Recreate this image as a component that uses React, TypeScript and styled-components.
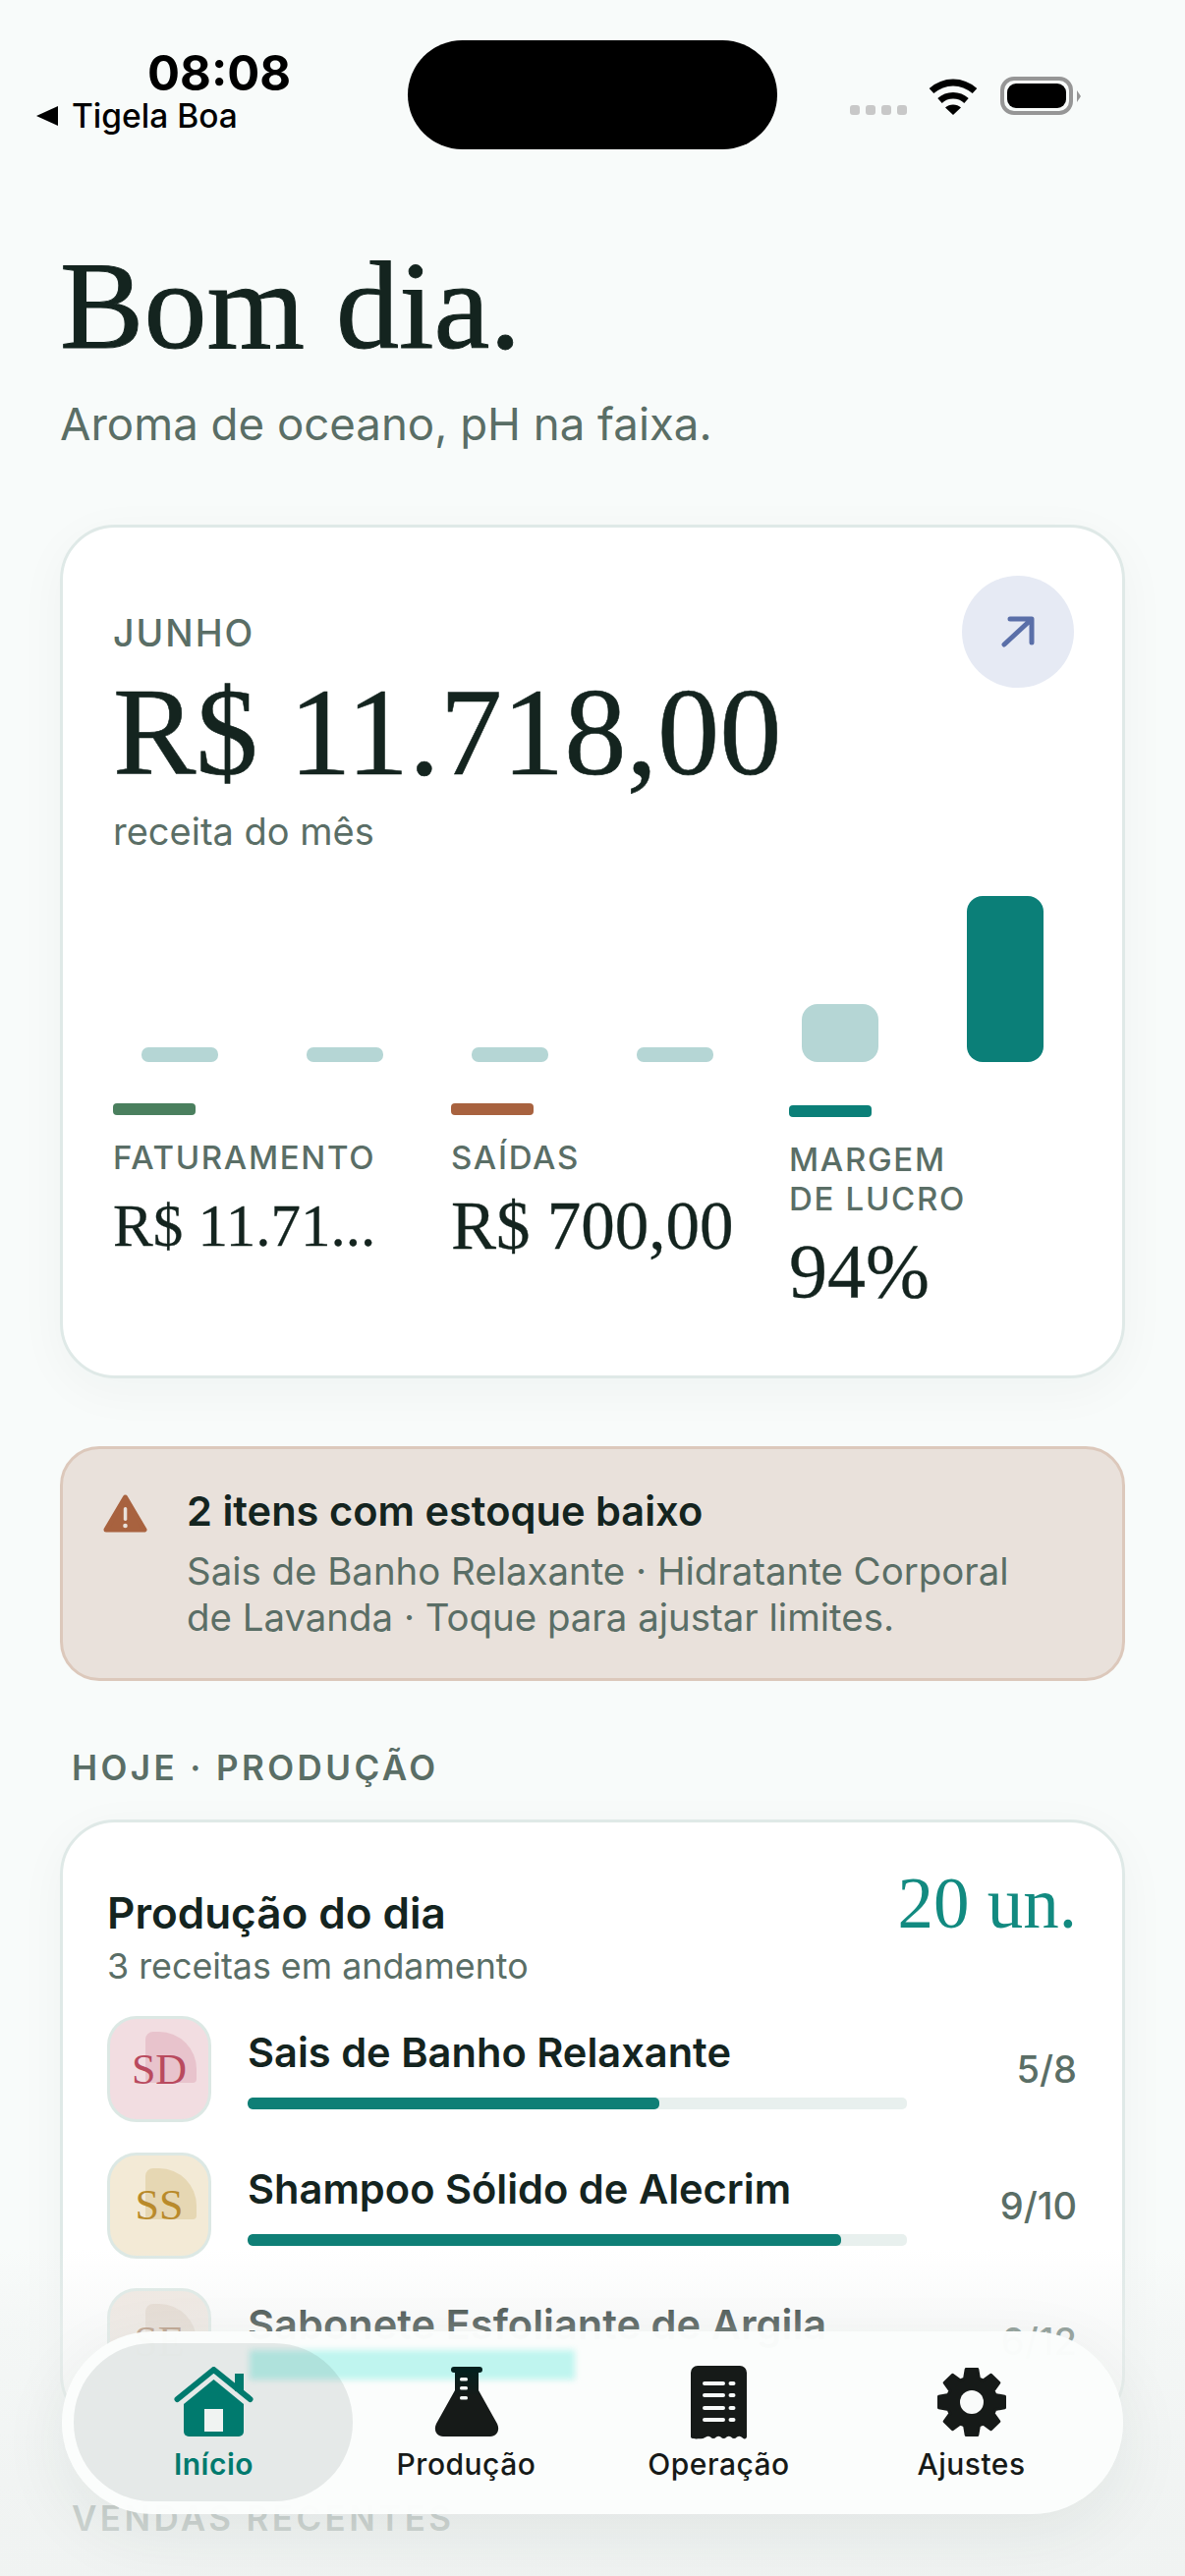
import React from 'react';

import styled, { createGlobalStyle } from 'styled-components';

const sans = `Inter, "Liberation Sans", sans-serif`;
const serif = `"Liberation Serif", "Times New Roman", serif`;

const GlobalStyle = createGlobalStyle`
  html, body {
    margin: 0;
    padding: 0;
    background: #f8fbfa;
  }
  * {
    box-sizing: border-box;
  }
`;

const Screen = styled.div`
  position: relative;
  width: 1206px;
  height: 2622px;
  overflow: hidden;
  background: #f8fbfa;
  font-family: ${sans};
  color: #14241f;
`;

const StatusBar = styled.div`
  display: flex;
  align-items: flex-start;
  height: 152px;
  padding-top: 41px;
`;

const StatusLeft = styled.div`
  width: 415px;
  display: flex;
  flex-direction: column;
  padding-left: 37px;
`;

const Time = styled.div`
  font-size: 49px;
  line-height: 54px;
  font-weight: 700;
  color: #000;
  margin: 7px 0 0 113px;
`;

const BackLink = styled.div`
  display: flex;
  align-items: center;
  gap: 14px;
  margin-top: -3px;
  font-size: 33.5px;
  line-height: 38px;
  font-weight: 500;
  color: #000;
`;

const Island = styled.div`
  width: 376px;
  height: 111px;
  border-radius: 56px;
  background: #000;
`;

const StatusRight = styled.div`
  display: flex;
  align-items: flex-end;
  margin-left: 74px;
  margin-top: 37px;
`;

const Signal = styled.div`
  display: flex;
  gap: 6px;
  margin-right: 22px;
`;

const SignalDot = styled.span`
  width: 10px;
  height: 10px;
  border-radius: 3px;
  background: #c8c8c8;
`;

const Battery = styled.div`
  position: relative;
  width: 74px;
  height: 39px;
  margin-left: 23px;
  border: 4px solid #969696;
  border-radius: 14px;
  padding: 3px;

  &::after {
    content: '';
    position: absolute;
    right: -12px;
    top: 10px;
    border-left: 4px solid #969696;
    border-top: 6px solid transparent;
    border-bottom: 6px solid transparent;
  }
`;

const BatteryLevel = styled.div`
  height: 100%;
  border-radius: 9px;
  background: #000;
`;

const Main = styled.main`
  padding: 94px 61px 0;
`;

const Title = styled.h1`
  margin: 0;
  font-family: ${serif};
  font-size: 128px;
  line-height: 130px;
  font-weight: 400;
  -webkit-text-stroke: 1px #14241f;
`;

const Subtitle = styled.p`
  margin: 29px 0 0;
  font-size: 45.6px;
  line-height: 54px;
  color: #5a6e66;
`;

const Card = styled.section`
  border: 3px solid #dfe9e7;
  border-radius: 56px;
  background: #fff;
  box-shadow: 0 12px 50px rgba(30, 60, 50, 0.04);
`;

const RevenueCard = styled(Card)`
  margin-top: 75px;
  height: 869px;
  padding: 49px 49px 0 51px;
`;

const RevenueHead = styled.div`
  display: flex;
  justify-content: space-between;
  align-items: flex-start;
`;

const RevenueText = styled.div`
  padding-top: 37px;
`;

const Month = styled.div`
  font-size: 37.5px;
  line-height: 44px;
  font-weight: 500;
  letter-spacing: 2px;
  color: #5a6e66;
`;

const Amount = styled.div`
  margin-top: 13px;
  font-family: ${serif};
  font-size: 126.5px;
  line-height: 130px;
  -webkit-text-stroke: 0.6px #14241f;
`;

const AmountCaption = styled.div`
  margin-top: 13px;
  font-size: 38px;
  line-height: 46px;
  color: #5a6e66;
`;

const TrendButton = styled.div`
  width: 114px;
  height: 114px;
  border-radius: 50%;
  background: #e6eaf4;
  display: flex;
  align-items: center;
  justify-content: center;
`;

const Chart = styled.div`
  display: flex;
  align-items: flex-end;
  gap: 90px;
  height: 169px;
  margin-top: 43px;
  padding-left: 29px;
`;

const Bar = styled.div<{ $height: number; $active?: boolean }>`
  width: 78px;
  height: ${(p) => p.$height}px;
  border-radius: ${(p) => (p.$height > 20 ? 16 : 7)}px;
  background: ${(p) => (p.$active ? '#0b7f78' : '#b5d6d5')};
`;

const Metrics = styled.div`
  display: grid;
  grid-template-columns: repeat(3, 320px);
  gap: 24px;
  margin-top: 42px;
`;

const Metric = styled.div<{ $inset?: number }>`
  padding-top: ${(p) => p.$inset ?? 0}px;
`;

const MetricSwatch = styled.div<{ $color: string }>`
  width: 84px;
  height: 12px;
  border-radius: 4px;
  background: ${(p) => p.$color};
`;

const MetricLabel = styled.div`
  margin-top: 23px;
  font-size: 33px;
  line-height: 40px;
  font-weight: 500;
  letter-spacing: 1.7px;
  color: #5a6e66;
`;

const MetricValue = styled.div<{ $size: number; $gap: number }>`
  margin-top: ${(p) => p.$gap}px;
  font-family: ${serif};
  font-size: ${(p) => p.$size}px;
  line-height: 1.2;
  white-space: nowrap;
  -webkit-text-stroke: 0.3px #14241f;
`;

const Alert = styled.section`
  display: flex;
  gap: 40px;
  margin-top: 69px;
  height: 239px;
  padding: 39px 40px 0 41px;
  border: 3px solid #dcc8bb;
  border-radius: 40px;
  background: #e9e1db;
`;

const AlertIcon = styled.svg`
  flex: none;
  margin-top: 7px;
`;

const AlertTitle = styled.div`
  font-size: 41.6px;
  line-height: 48px;
  font-weight: 600;
`;

const AlertBody = styled.div`
  margin-top: 14px;
  font-size: 38.4px;
  line-height: 47px;
  color: #5a6e66;
`;

const SectionLabel = styled.h2<{ $top: number }>`
  margin: ${(p) => p.$top}px 0 0 12px;
  font-size: 35px;
  line-height: 42px;
  font-weight: 600;
  letter-spacing: 3.4px;
  color: #5a6e66;
`;

const ProductionCard = styled(Card)`
  margin-top: 32px;
  padding: 43px 46px 33px 45px;
`;

const ProductionHead = styled.div`
  display: flex;
  justify-content: space-between;
  align-items: flex-start;
`;

const ProductionTitle = styled.div`
  padding-top: 24px;
  font-size: 44px;
  line-height: 50px;
  font-weight: 600;
`;

const ProductionCaption = styled.div`
  margin-top: 8px;
  font-size: 35.8px;
  line-height: 42px;
  color: #5a6e66;
`;

const ProductionTotal = styled.div`
  font-family: ${serif};
  font-size: 73px;
  line-height: 80px;
  color: #128a80;
`;

const Rows = styled.div`
  display: flex;
  flex-direction: column;
  gap: 30.5px;
  margin-top: 30px;
`;

const Row = styled.div`
  display: flex;
  align-items: center;
`;

const Avatar = styled.div<{ $bg: string; $color: string }>`
  position: relative;
  flex: none;
  width: 106px;
  height: 108px;
  display: flex;
  align-items: center;
  justify-content: center;
  border: 3px solid #dce8e4;
  border-radius: 30px;
  background: ${(p) => p.$bg};
  color: ${(p) => p.$color};
  font-family: ${serif};
  font-size: 44px;
`;

const AvatarBlob = styled.span<{ $color: string }>`
  position: absolute;
  right: 12px;
  top: 13px;
  width: 52px;
  height: 52px;
  border-radius: 8px 38px 4px 4px;
  background: ${(p) => p.$color};
`;

const AvatarText = styled.span`
  position: relative;
`;

const RowBody = styled.div`
  flex: 0 0 671px;
  align-self: flex-start;
  margin-left: 37px;
  padding-top: 12px;
`;

const RowName = styled.div`
  font-size: 41.6px;
  line-height: 50px;
  font-weight: 600;
`;

const Track = styled.div`
  height: 12px;
  margin-top: 21px;
  border-radius: 5px;
  background: #e8f0ee;
  overflow: hidden;
`;

const Fill = styled.div`
  height: 100%;
  border-radius: 5px;
  background: #0f7f76;
`;

const RowCount = styled.div`
  margin-left: auto;
  font-size: 38px;
  line-height: 44px;
  font-weight: 500;
  color: #5a6e66;
`;

const BottomFade = styled.div`
  position: absolute;
  left: 0;
  right: 0;
  top: 2290px;
  bottom: 0;
  background: linear-gradient(
    to bottom,
    rgba(238, 241, 240, 0) 0%,
    rgba(238, 241, 240, 0.42) 25%,
    rgba(238, 241, 240, 0.78) 85%
  );
`;

const TabBar = styled.nav`
  position: absolute;
  left: 63px;
  bottom: 63px;
  width: 1080px;
  display: flex;
  padding: 36px 24px 33px 26px;
  border-radius: 93px;
  background: rgba(251, 253, 252, 0.98);
  box-shadow: 0 20px 70px rgba(30, 50, 45, 0.07);
`;

const TabGlow = styled.div`
  position: absolute;
  left: 191px;
  top: 19px;
  width: 331px;
  height: 30px;
  background: #bff5ef;
  filter: blur(3px);
`;

const Tab = styled.div<{ $active?: boolean }>`
  position: relative;
  width: 257px;
  display: flex;
  flex-direction: column;
  align-items: center;
  color: ${(p) => (p.$active ? '#007a6e' : '#161a18')};

  ${(p) =>
    p.$active &&
    `
    &::before {
      content: '';
      position: absolute;
      inset: -24px -13px -20px -14px;
      border-radius: 80px;
      background: rgba(40, 60, 55, 0.1);
    }
  `}
`;

const TabIcon = styled.div`
  position: relative;
  height: 72px;
  display: flex;
  align-items: center;
`;

const TabLabel = styled.div<{ $active?: boolean }>`
  position: relative;
  margin-top: 9px;
  font-size: 30px;
  line-height: 36px;
  font-weight: ${(p) => (p.$active ? 600 : 500)};
  letter-spacing: 0.5px;
`;

function gearPath() {
  const cx = 36;
  const cy = 36;
  const points: string[] = [];
  for (let i = 0; i < 8; i++) {
    const a = (i * Math.PI) / 4 - Math.PI / 2;
    const spec: [number, number][] = [
      [25, -0.3],
      [34, -0.17],
      [34, 0.17],
      [25, 0.3],
    ];
    spec.forEach(([r, d]) => {
      points.push(
        `${(cx + r * Math.cos(a + d)).toFixed(1)} ${(cy + r * Math.sin(a + d)).toFixed(1)}`,
      );
    });
  }
  return `M${points.join('L')}Z`;
}

function HomeIcon() {
  return (
    <svg width="81" height="72" viewBox="0 0 81 72">
      <path d="M62 7h9v18h-9z" fill="currentColor" />
      <path
        d="M3.500 33 40.500 3 77.500 33"
        fill="none"
        stroke="currentColor"
        strokeWidth="6"
        strokeLinecap="round"
        strokeLinejoin="round"
      />
      <path
        d="M40.500 13 71 38v28a5 5 0 0 1-5 5H15a5 5 0 0 1-5-5V38z"
        fill="currentColor"
      />
      <rect x="31" y="43" width="19" height="23" fill="#f0f3f2" />
    </svg>
  );
}

function FlaskIcon() {
  return (
    <svg width="66" height="72" viewBox="0 0 66 72">
      <defs>
        <linearGradient id="flaskFill" x1="0" y1="0" x2="0" y2="1">
          <stop offset="0" stopColor="#04201e" />
          <stop offset="0.4" stopColor="#161a18" />
        </linearGradient>
      </defs>
      <rect x="17" y="0" width="32" height="6" rx="3" fill="#04201e" />
      <path
        d="M21 4h24v20l19 34c3 6 0 13-7 13H9c-7 0-10-7-7-13l19-34z"
        fill="url(#flaskFill)"
      />
      <rect x="26" y="11" width="8" height="3.500" rx="1.500" fill="#f4f7f6" />
      <rect x="26" y="20" width="8" height="3.500" rx="1.500" fill="#f4f7f6" />
      <rect x="26" y="30" width="8" height="3.500" rx="1.500" fill="#f4f7f6" />
    </svg>
  );
}

function ReceiptIcon() {
  return (
    <svg width="57" height="75" viewBox="0 0 57 75">
      <path
        d="M7 0h43a7 7 0 0 1 7 7v65c0 2-2 3-3.500 2l-2-1.500c-1.500-1-3-1-4.500 0-2 2-4 2-6 0-1.500-1-3-1-4.500 0-2 2-4 2-6 0-1.500-1-3-1-4.500 0-2 2-4 2-6 0-1.500-1-3-1-4.500 0l-3 1.500C2 75 0 74 0 72V7a7 7 0 0 1 7-7z"
        fill="#161a18"
      />
      <g stroke="#f7faf9" strokeWidth="4" strokeLinecap="round">
        <path d="M14 18h19M14 30h19M14 43h19M14 55h19" />
        <path d="M40.500 18h3M40.500 30h3M40.500 43h3M40.500 55h3" />
      </g>
    </svg>
  );
}

function GearIcon() {
  return (
    <svg width="72" height="72" viewBox="0 0 72 72">
      <path
        d={gearPath()}
        fill="#161a18"
        stroke="#161a18"
        strokeWidth="3"
        strokeLinejoin="round"
      />
      <circle cx="36" cy="36" r="12" fill="#f9fbfa" />
    </svg>
  );
}

const rows = [
  {
    initials: 'SD',
    name: 'Sais de Banho Relaxante',
    count: '5/8',
    pct: 62.5,
    bg: '#f2dde1',
    blob: '#e8c3cc',
    color: '#b94a5e',
  },
  {
    initials: 'SS',
    name: 'Shampoo Sólido de Alecrim',
    count: '9/10',
    pct: 90,
    bg: '#f3ead6',
    blob: '#e6d7b3',
    color: '#b98a2a',
  },
  {
    initials: 'SE',
    name: 'Sabonete Esfoliante de Argila',
    count: '6/12',
    pct: 50,
    bg: '#efe6df',
    blob: '#e2d5ca',
    color: '#a57a5c',
  },
];

function App() {
  return (
    <Screen>
      <GlobalStyle />
      <StatusBar>
        <StatusLeft>
          <Time>08:08</Time>
          <BackLink>
            <svg width="22" height="20" viewBox="0 0 22 20">
              <path d="M22 0v20L0 10z" fill="#000" />
            </svg>
            Tigela Boa
          </BackLink>
        </StatusLeft>
        <Island />
        <StatusRight>
          <Signal>
            <SignalDot />
            <SignalDot />
            <SignalDot />
            <SignalDot />
          </Signal>
          <svg width="50" height="37" viewBox="0 0 50 37">
            <path
              d="M3 12.500C16 1 34 1 47 12.500"
              fill="none"
              stroke="#000"
              strokeWidth="7"
            />
            <path
              d="M11.500 22.500C19 15.500 31 15.500 38.500 22.500"
              fill="none"
              stroke="#000"
              strokeWidth="6.500"
            />
            <path d="M17 29.500C21 25.500 29 25.500 33 29.500L25 37z" fill="#000" />
          </svg>
          <Battery>
            <BatteryLevel />
          </Battery>
        </StatusRight>
      </StatusBar>

      <Main>
        <Title>Bom dia.</Title>
        <Subtitle>Aroma de oceano, pH na faixa.</Subtitle>

        <RevenueCard>
          <RevenueHead>
            <RevenueText>
              <Month>JUNHO</Month>
              <Amount>R$ 11.718,00</Amount>
              <AmountCaption>receita do mês</AmountCaption>
            </RevenueText>
            <TrendButton>
              <svg width="34" height="32" viewBox="0 0 34 32">
                <path
                  d="M3 29 30 4M9 3h22v24"
                  fill="none"
                  stroke="#5a6fa8"
                  strokeWidth="5"
                  strokeLinecap="round"
                  strokeLinejoin="round"
                />
              </svg>
            </TrendButton>
          </RevenueHead>

          <Chart>
            <Bar $height={15} />
            <Bar $height={15} />
            <Bar $height={15} />
            <Bar $height={15} />
            <Bar $height={59} />
            <Bar $height={169} $active />
          </Chart>

          <Metrics>
            <Metric>
              <MetricSwatch $color="#4a7f5e" />
              <MetricLabel>FATURAMENTO</MetricLabel>
              <MetricValue $size={61} $gap={13}>
                R$ 11.71...
              </MetricValue>
            </Metric>
            <Metric>
              <MetricSwatch $color="#a8623f" />
              <MetricLabel>SAÍDAS</MetricLabel>
              <MetricValue $size={69} $gap={9}>
                R$ 700,00
              </MetricValue>
            </Metric>
            <Metric $inset={2}>
              <MetricSwatch $color="#0b7f78" />
              <MetricLabel>
                MARGEM
                <br />
                DE LUCRO
              </MetricLabel>
              <MetricValue $size={78} $gap={7}>
                94%
              </MetricValue>
            </Metric>
          </Metrics>
        </RevenueCard>

        <Alert>
          <AlertIcon width="45" height="40" viewBox="0 0 45 40">
            <path
              d="M22.500 3 42 36H3z"
              fill="#a8623f"
              stroke="#a8623f"
              strokeWidth="5"
              strokeLinejoin="round"
            />
            <rect x="20.800" y="13" width="3.500" height="14" rx="1.700" fill="#e9e1db" />
            <circle cx="22.500" cy="32" r="2.300" fill="#e9e1db" />
          </AlertIcon>
          <div>
            <AlertTitle>2 itens com estoque baixo</AlertTitle>
            <AlertBody>
              Sais de Banho Relaxante · Hidratante Corporal
              <br />
              de Lavanda · Toque para ajustar limites.
            </AlertBody>
          </div>
        </Alert>

        <SectionLabel $top={67}>HOJE · PRODUÇÃO</SectionLabel>

        <ProductionCard>
          <ProductionHead>
            <div>
              <ProductionTitle>Produção do dia</ProductionTitle>
              <ProductionCaption>3 receitas em andamento</ProductionCaption>
            </div>
            <ProductionTotal>20 un.</ProductionTotal>
          </ProductionHead>
          <Rows>
            {rows.map((row) => (
              <Row key={row.initials}>
                <Avatar $bg={row.bg} $color={row.color}>
                  <AvatarBlob $color={row.blob} />
                  <AvatarText>{row.initials}</AvatarText>
                </Avatar>
                <RowBody>
                  <RowName>{row.name}</RowName>
                  <Track>
                    <Fill style={{ width: `${row.pct}%` }} />
                  </Track>
                </RowBody>
                <RowCount>{row.count}</RowCount>
              </Row>
            ))}
          </Rows>
        </ProductionCard>

        <SectionLabel $top={69}>VENDAS RECENTES</SectionLabel>
      </Main>

      <BottomFade />

      <TabBar>
        <TabGlow />
        <Tab $active>
          <TabIcon>
            <HomeIcon />
          </TabIcon>
          <TabLabel $active>Início</TabLabel>
        </Tab>
        <Tab>
          <TabIcon>
            <FlaskIcon />
          </TabIcon>
          <TabLabel>Produção</TabLabel>
        </Tab>
        <Tab>
          <TabIcon>
            <ReceiptIcon />
          </TabIcon>
          <TabLabel>Operação</TabLabel>
        </Tab>
        <Tab>
          <TabIcon>
            <GearIcon />
          </TabIcon>
          <TabLabel>Ajustes</TabLabel>
        </Tab>
      </TabBar>
    </Screen>
  );
}

export default App;
